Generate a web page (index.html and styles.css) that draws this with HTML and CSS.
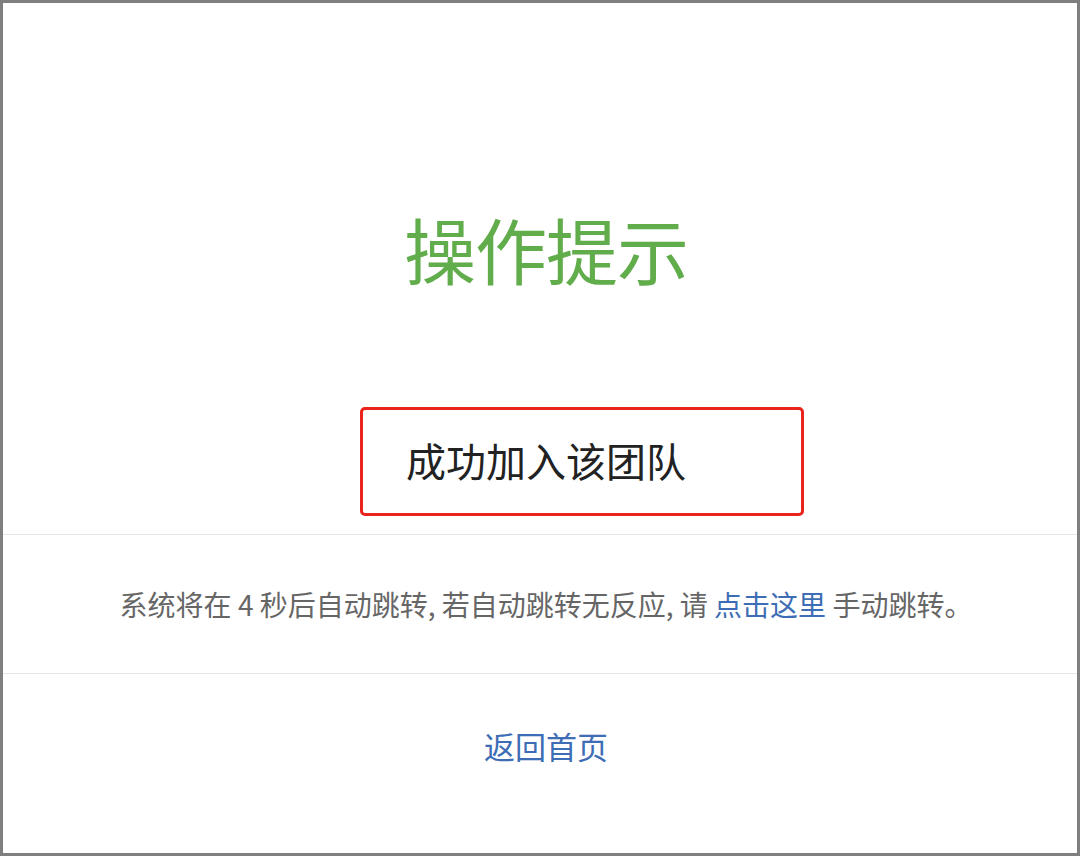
FILE: index.html
```html
<!DOCTYPE html>
<html lang="zh-CN">
<head>
    <meta charset="UTF-8">
    <meta name="viewport" content="width=device-width, initial-scale=1.0">
    <title>操作提示</title>
    <link rel="stylesheet" href="styles.css">
</head>
<body>

    <div class="frame">
        <div class="top-section">
            <h1 class="title">操作提示</h1>
            <div class="message-row">
                <p class="message">成功加入该团队</p>
            </div>
        </div>

        <div class="redirect-section">
            <p class="redirect-text">系统将在 <span id="seconds">4</span> 秒后自动跳转, 若自动跳转无反应, 请 <a href="#" class="link">点击这里</a> 手动跳转。</p>
        </div>

        <div class="home-section">
            <a href="#" class="link home-link">返回首页</a>
        </div>
    </div>

</body>
</html>
```

FILE: styles.css
```css
html, body {
    margin: 0;
    padding: 0;
    background: #fff;
}
body {
    font-family: "Noto Sans CJK SC", "Noto Sans", sans-serif;
}
.frame {
    width: 1080px;
    height: 856px;
    box-sizing: border-box;
    border: 3px solid #7f7f7f;
    display: flex;
    flex-direction: column;
}
.top-section {
    height: 532px;
    border-bottom: 1px solid #e6e6e6;
    box-sizing: border-box;
    padding-top: 200px;
    padding-left: 12px;
}
.title {
    margin: 0;
    text-align: center;
    font-size: 72px;
    line-height: 90px;
    font-weight: normal;
    color: #62ad4b;
    letter-spacing: -1px;
}
.message-row {
    margin-top: 142px;
    display: flex;
    justify-content: center;
}
.message {
    position: relative;
    margin: 0;
    font-size: 40px;
    line-height: 50px;
    color: #222;
}
/* red annotation box drawn over the message */
.message::before {
    content: "";
    position: absolute;
    left: -46px;
    right: -118px;
    top: -28px;
    bottom: -31px;
    border: 3px solid #e8241c;
    border-radius: 5px;
}
.redirect-section {
    height: 139px;
    border-bottom: 1px solid #e6e6e6;
    box-sizing: border-box;
    display: flex;
    align-items: center;
    justify-content: center;
    padding-left: 12px;
}
.redirect-text {
    margin: 0;
    font-size: 28px;
    color: #666;
}
.link {
    color: #3d6db4;
    text-decoration: none;
}
.home-section {
    flex: 1;
    text-align: center;
    padding-top: 50px;
    padding-left: 12px;
}
.home-link {
    font-size: 31px;
    line-height: 44px;
}
```
